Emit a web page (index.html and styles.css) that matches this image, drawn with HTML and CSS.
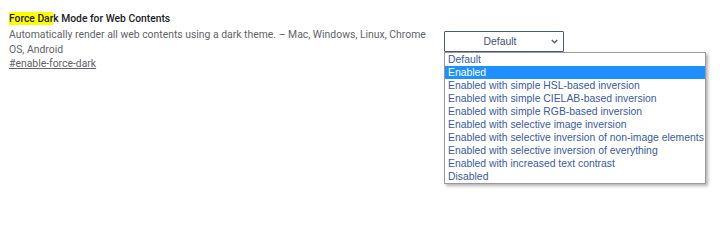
FILE: index.html
```html
<!DOCTYPE html>
<html>
<head>
<meta charset="utf-8">
<link rel="stylesheet" href="styles.css">
</head>
<body>
<div class="experiment">
  <div class="experiment-text">
    <h3 class="experiment-name"><mark class="hit">Force Dar</mark>k Mode for Web Contents</h3>
    <p class="description">Automatically render all web contents using a dark theme. – Mac, Windows, Linux, Chrome OS, Android</p>
    <a class="permalink" href="#enable-force-dark">#enable-force-dark</a>
  </div>
  <div class="experiment-actions">
    <div class="select">
      <span class="select-value">Default</span>
      <svg class="chevron" width="7" height="5" viewBox="0 0 7 5"><path d="M0.8 1 L3.5 3.7 L6.2 1" fill="none" stroke="#4a5f8e" stroke-width="1.5"/></svg>
    </div>
    <ul class="options">
      <li>Default</li>
      <li class="selected">Enabled</li>
      <li>Enabled with simple HSL-based inversion</li>
      <li>Enabled with simple CIELAB-based inversion</li>
      <li>Enabled with simple RGB-based inversion</li>
      <li>Enabled with selective image inversion</li>
      <li>Enabled with selective inversion of non-image elements</li>
      <li>Enabled with selective inversion of everything</li>
      <li>Enabled with increased text contrast</li>
      <li>Disabled</li>
    </ul>
  </div>
</div>
</body>
</html>
```

FILE: styles.css
```css
html, body {
  margin: 0;
  padding: 0;
  background: #ffffff;
}

body {
  min-height: 200px;
}

.experiment {
  display: flex;
  align-items: flex-start;
  padding: 12px 0 0 9px;
  font-family: Roboto, "Liberation Sans", Arial, sans-serif;
}

.experiment-text {
  width: 432px;
  flex: none;
}

.experiment-name {
  margin: 0 0 2px 0;
  font-size: 10.3px;
  line-height: 14px;
  font-weight: 500;
  color: #202124;
}

.hit {
  background: #ffff00;
  color: #202124;
}

.description {
  margin: 0;
  font-size: 10.4px;
  line-height: 14.6px;
  color: #5f6368;
}

.permalink {
  display: block;
  font-size: 10.4px;
  line-height: 14.6px;
  color: #5f6368;
  text-decoration: underline;
}

.experiment-actions {
  display: flex;
  flex-direction: column;
  align-items: flex-start;
  margin-left: 3px;
  margin-top: 19px;
}

.select {
  box-sizing: border-box;
  width: 120px;
  height: 21px;
  border: 1px solid #4a5a78;
  border-radius: 1px;
  display: flex;
  align-items: center;
  padding: 0 5px 0 6px;
  font-family: "Liberation Sans", Arial, sans-serif;
  font-size: 10.4px;
  color: #3f5078;
}

.select-value {
  flex: 1;
  text-align: center;
  padding-left: 4px;
}

.chevron {
  display: block;
  margin-left: 6px;
}

.options {
  box-sizing: border-box;
  width: 262px;
  margin: 0;
  padding: 0;
  list-style: none;
  background: #ffffff;
  border: 1px solid #9a9a9a;
  box-shadow: 2px 2px 3px rgba(0, 0, 0, 0.3);
  font-family: "Liberation Sans", Arial, sans-serif;
  font-size: 10.4px;
  color: #3b5b9c;
}

.options li {
  height: 13px;
  line-height: 13px;
  padding-left: 3px;
  white-space: nowrap;
}

.options li.selected {
  background: #1e90ff;
  color: #ffffff;
}
```
